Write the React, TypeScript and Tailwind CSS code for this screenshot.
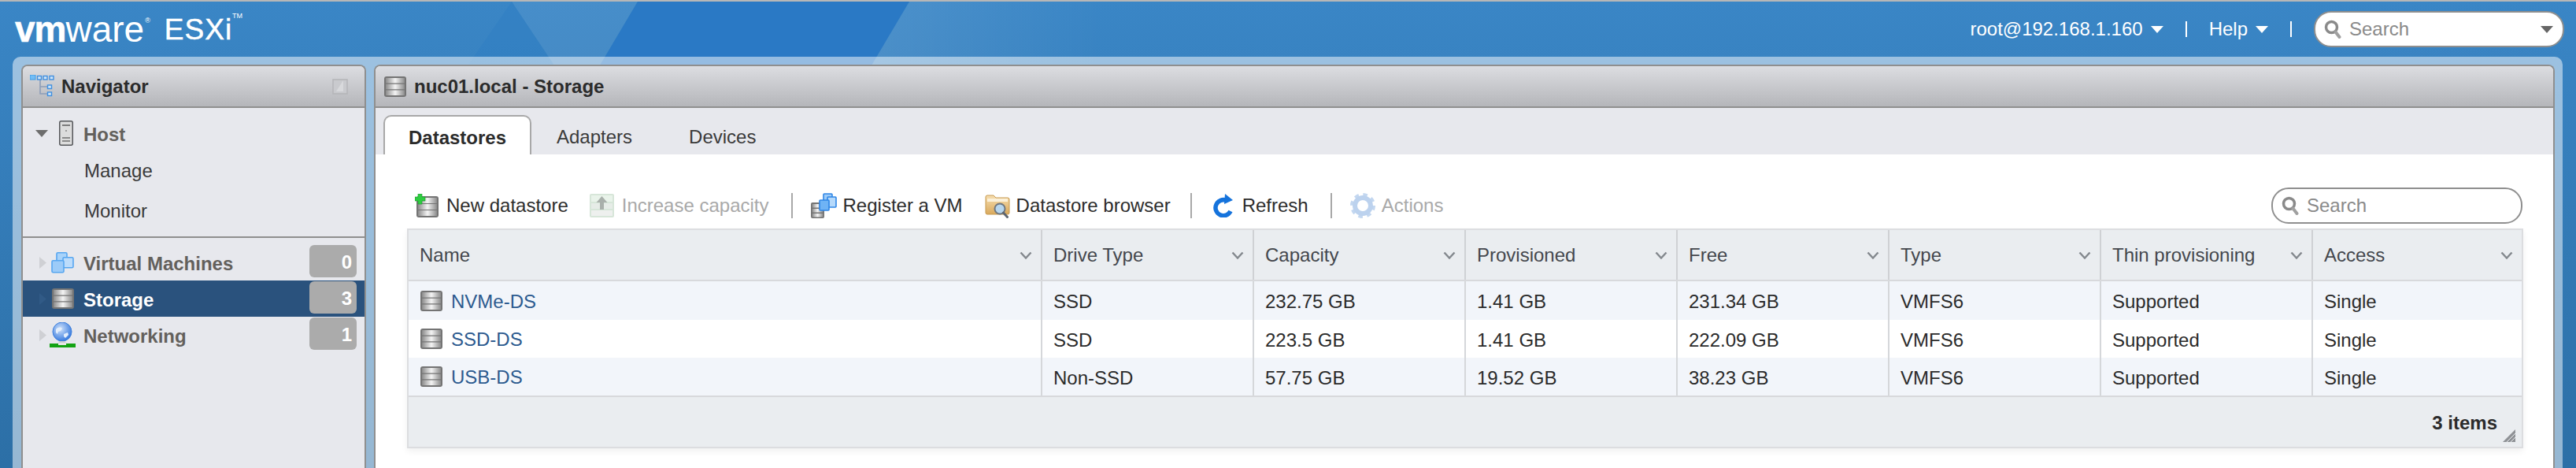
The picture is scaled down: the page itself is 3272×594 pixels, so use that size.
import React from "react";

function Defs() {
  return (
    <svg className="absolute w-0 h-0" aria-hidden="true">
      <defs>
        <linearGradient id="band" x1="0" y1="0" x2="1" y2="0">
          <stop offset="0" stopColor="#8c8c8c" />
          <stop offset="0.5" stopColor="#f4f4f4" />
          <stop offset="1" stopColor="#8c8c8c" />
        </linearGradient>
        <linearGradient id="wedge" x1="0" y1="0" x2="1" y2="0">
          <stop offset="0" stopColor="#ffffff" stopOpacity="0.1" />
          <stop offset="1" stopColor="#ffffff" stopOpacity="0" />
        </linearGradient>
        <radialGradient id="globe" cx="0.4" cy="0.35" r="0.7">
          <stop offset="0" stopColor="#cfe2fb" />
          <stop offset="1" stopColor="#2f74dc" />
        </radialGradient>
        <linearGradient id="folder" x1="0" y1="0" x2="0" y2="1">
          <stop offset="0" stopColor="#f6deb0" />
          <stop offset="1" stopColor="#d9a95c" />
        </linearGradient>
      </defs>
    </svg>
  );
}

function Disk({ className }: { className?: string }) {
  return (
    <svg viewBox="0 0 28 26" className={className}>
      <rect x="0" y="0" width="28" height="26" rx="3" fill="#747474" />
      <rect x="2" y="2" width="24" height="6.5" fill="url(#band)" />
      <rect x="2" y="9.75" width="24" height="6.5" fill="url(#band)" />
      <rect x="2" y="17.5" width="24" height="6.5" fill="url(#band)" />
    </svg>
  );
}

function TreeIcon() {
  return (
    <svg viewBox="0 0 32 30" className="w-[32px] h-[30px] shrink-0">
      <path d="M13 6V24H23M13 15H23" fill="none" stroke="#8c9db8" strokeWidth="1.6" />
      <rect x="0" y="0" width="7" height="6" fill="#73bdf5" stroke="#3f9be6" strokeWidth="1" />
      <rect x="9.5" y="1.5" width="5" height="4.5" fill="#cfe5f8" stroke="#3f8fe0" strokeWidth="1.4" />
      <rect x="17" y="1.5" width="5" height="4.5" fill="#cfe5f8" stroke="#3f8fe0" strokeWidth="1.4" />
      <rect x="25" y="1.5" width="5" height="4.5" fill="#cfe5f8" stroke="#3f8fe0" strokeWidth="1.4" />
      <rect x="22.5" y="13" width="5" height="4.5" fill="#cfe5f8" stroke="#3f8fe0" strokeWidth="1.4" />
      <rect x="22.5" y="22" width="5" height="4.5" fill="#cfe5f8" stroke="#3f8fe0" strokeWidth="1.4" />
    </svg>
  );
}

function HostIcon() {
  return (
    <svg viewBox="0 0 18 32" className="w-[18px] h-[32px] shrink-0">
      <rect x="0.75" y="0.75" width="16.5" height="30.5" rx="2" fill="#dcdcdc" stroke="#55575a" strokeWidth="1.5" />
      <rect x="4" y="5" width="10" height="2" fill="#7c7c7c" />
      <rect x="8" y="12" width="2" height="2" fill="#9a9a9a" />
      <rect x="4" y="21" width="10" height="2" fill="#8a8a8a" />
      <rect x="4" y="25" width="10" height="2" fill="#8a8a8a" />
    </svg>
  );
}

function VmIcon({ className }: { className?: string }) {
  return (
    <svg viewBox="0 0 29 27" className={className}>
      <rect x="7" y="0.8" width="13" height="13" rx="1.5" fill="#a8d3fa" stroke="#56a6f0" strokeWidth="1.6" />
      <rect x="15" y="6.8" width="13" height="13" rx="1.5" fill="#bcdcfb" stroke="#56a6f0" strokeWidth="1.6" />
      <rect x="1" y="10.8" width="15" height="15" rx="1.5" fill="#9ccbf8" stroke="#56a6f0" strokeWidth="1.6" />
    </svg>
  );
}

function GlobeIcon() {
  return (
    <svg viewBox="0 0 33 32" className="w-[33px] h-[32px] shrink-0">
      <circle cx="16" cy="12" r="12" fill="url(#globe)" stroke="#3d7fdc" strokeWidth="1" />
      <path d="M8 9c3-3 6-3 8-1l-2 3-3 1-1 3-2-2zM18 15l5-2 1 3-4 4-2-2z" fill="#e3eefc" />
      <path d="M13 24h6l3 3H10z" fill="#c9ccd2" />
      <rect x="0" y="27" width="33" height="5" fill="#13a313" />
      <rect x="11" y="26" width="10" height="3" fill="#e6e6e6" />
    </svg>
  );
}

function NewDsIcon() {
  return (
    <svg viewBox="0 0 30 30" className="w-[30px] h-[30px] shrink-0">
      <g transform="translate(2 3)">
        <rect x="0" y="0" width="28" height="27" rx="3" fill="#747474" />
        <rect x="2" y="2" width="24" height="7" fill="url(#band)" />
        <rect x="2" y="10" width="24" height="7" fill="url(#band)" />
        <rect x="2" y="18" width="24" height="7" fill="url(#band)" />
      </g>
      <path d="M4 0h5v4h4v5H9v4H4V9H0V4h4z" fill="#2ecc40" stroke="#1d9a2c" strokeWidth="0.6" />
    </svg>
  );
}

function IncreaseIcon() {
  return (
    <svg viewBox="0 0 31 30" className="w-[31px] h-[30px] shrink-0">
      <rect x="0" y="0" width="31" height="30" rx="2" fill="#d7e6d9" />
      <rect x="2" y="2" width="27" height="8" fill="#e9f3ea" />
      <rect x="2" y="12" width="27" height="7" fill="#e6ece7" />
      <rect x="2" y="21" width="27" height="7" fill="#eef0ee" />
      <path d="M15.5 3l7 8h-4.5v9h-5v-9H8.500z" fill="#a9b0ab" />
    </svg>
  );
}

function RegisterIcon() {
  return (
    <svg viewBox="0 0 33 32" className="w-[33px] h-[32px] shrink-0">
      <rect x="0" y="12" width="17" height="20" rx="2" fill="#747474" />
      <rect x="1.500" y="14" width="14" height="4.500" fill="url(#band)" />
      <rect x="1.500" y="20" width="14" height="4.500" fill="url(#band)" />
      <rect x="1.500" y="26" width="14" height="4.500" fill="url(#band)" />
      <rect x="16" y="1" width="11" height="13" rx="1" fill="#9ccbf8" stroke="#2f86e6" strokeWidth="1.600" />
      <rect x="21" y="5" width="11" height="13" rx="1" fill="#b5d9fb" stroke="#2f86e6" strokeWidth="1.600" />
      <rect x="11" y="9" width="12" height="13" rx="1" fill="#6fb3f5" stroke="#2f86e6" strokeWidth="1.600" />
    </svg>
  );
}

function FolderIcon() {
  return (
    <svg viewBox="0 0 32 32" className="w-[32px] h-[32px] shrink-0">
      <path d="M1 5a2 2 0 0 1 2-2h8l3 3h15a2 2 0 0 1 2 2v17a2 2 0 0 1-2 2H3a2 2 0 0 1-2-2z" fill="url(#folder)" stroke="#c79a50" strokeWidth="1" />
      <rect x="3" y="7" width="26" height="4" fill="#fbf0d8" />
      <circle cx="19" cy="20" r="6.500" fill="#b7d6ee" stroke="#6f7780" strokeWidth="2" />
      <path d="M23.500 25l5 5.500" stroke="#5e6670" strokeWidth="3" strokeLinecap="round" />
    </svg>
  );
}

function RefreshIcon() {
  return (
    <svg viewBox="0 0 28 30" className="w-[28px] h-[30px] shrink-0">
      <path d="M19 8.500A10 10 0 1 0 24 22" fill="none" stroke="#1573dc" strokeWidth="5.500" />
      <path d="M17 0l10 8-11 5z" fill="#1573dc" />
    </svg>
  );
}

function GearIcon() {
  return (
    <svg viewBox="0 0 32 32" className="w-[32px] h-[32px] shrink-0">
      <circle cx="16" cy="16" r="13" fill="none" stroke="#c3d7f0" strokeWidth="6" strokeDasharray="5.100 5.100" />
      <circle cx="16" cy="16" r="10" fill="none" stroke="#bcd2ee" strokeWidth="6" />
    </svg>
  );
}

function Glass() {
  return (
    <svg viewBox="0 0 22 24" className="w-[22px] h-[24px] shrink-0">
      <circle cx="9.500" cy="9.500" r="7" fill="none" stroke="#8a8a8a" strokeWidth="3.500" />
      <path d="M14.500 15.500l5 6.500" stroke="#a0a0a0" strokeWidth="4" strokeLinecap="round" />
    </svg>
  );
}

function Caret({ color }: { color: string }) {
  return (
    <svg viewBox="0 0 16 9" className="w-[16px] h-[9px] shrink-0">
      <path d="M0 0h16L8 9z" fill={color} />
    </svg>
  );
}

function Chevron() {
  return (
    <svg viewBox="0 0 16 10" className="w-[16px] h-[10px] shrink-0">
      <path d="M1.500 1.500L8 8.500L14.500 1.500" fill="none" stroke="#83888d" strokeWidth="2.400" />
    </svg>
  );
}

function SideArrow({ dark }: { dark?: boolean }) {
  return (
    <svg viewBox="0 0 9 15" className="w-[9px] h-[15px] shrink-0">
      <path d="M0 0l9 7.500L0 15z" fill={dark ? "#315a86" : "#cfd0d4"} />
    </svg>
  );
}

function SideRow({ icon, label, count, active }: { icon: React.ReactNode; label: string; count: number; active?: boolean }) {
  return (
    <div className={`h-[46px] flex items-center relative pl-[21px] ${active ? "bg-[#2a527d] text-white" : "text-[#63605c]"}`}>
      <SideArrow dark={active} />
      <div className="w-[47px] flex justify-center -translate-x-[3px]">{icon}</div>
      <span className="text-[24px] font-bold translate-y-[2px]">{label}</span>
      <span className="absolute right-[10px] top-[1px] w-[60px] h-[41px] rounded-[6px] bg-[#ababab] text-white font-bold text-[24px] flex items-center justify-end pr-[6px] pt-[2px]">{count}</span>
    </div>
  );
}

const columns = ["Name", "Drive Type", "Capacity", "Provisioned", "Free", "Type", "Thin provisioning", "Access"];
const rows = [
  ["NVMe-DS", "SSD", "232.75 GB", "1.41 GB", "231.34 GB", "VMFS6", "Supported", "Single"],
  ["SSD-DS", "SSD", "223.5 GB", "1.41 GB", "222.09 GB", "VMFS6", "Supported", "Single"],
  ["USB-DS", "Non-SSD", "57.75 GB", "19.52 GB", "38.23 GB", "VMFS6", "Supported", "Single"],
];
const rowHeights = ["h-[49px]", "h-[48px]", "h-[48px]"];

function Tool({ icon, label, disabled, gap }: { icon: React.ReactNode; label: string; disabled?: boolean; gap: string }) {
  return (
    <div className={`flex items-center ${gap}`}>
      {icon}
      <span className={disabled ? "text-[#a9a9a9]" : "text-[#2d2d2d]"}>{label}</span>
    </div>
  );
}

function Sep() {
  return <div className="w-[2px] h-[32px] bg-[#a8a8a8]" />;
}

export default function App() {
  return (
    <div className="relative w-[3272px] h-[594px] overflow-hidden flex flex-col bg-gradient-to-b from-[#3a86c6] to-[#2c6fa6] font-['Liberation_Sans',sans-serif] text-[24px] leading-none">
      <Defs />
      <svg className="absolute left-0 top-0 w-[1400px] h-[110px]" viewBox="0 0 1400 110" aria-hidden="true">
        <polygon points="650,2 595,82 595,110 722,110" fill="#2b7ac3" fillOpacity="0.35" />
        <polygon points="650,2 810,2 746,110 722,110" fill="#ffffff" fillOpacity="0.07" />
        <polygon points="810,2 1155,2 1091,110 746,110" fill="#2a79c5" />
        <polygon points="1155,2 1400,2 1400,110 1091,110" fill="url(#wedge)" />
      </svg>

      <div className="relative h-[2px] bg-[#b7b7b7] shrink-0" />

      <header className="relative h-[70px] shrink-0 flex items-center justify-between pl-[19px] pr-[15px] text-white">
        <div className="flex items-center">
          <div className="flex items-start">
            <span className="text-[46px] font-bold tracking-[-1px] [-webkit-text-stroke:0.6px_white]">vm</span>
            <span className="text-[46px]">ware</span>
            <span className="text-[9px] ml-[1px] mt-[8px]">®</span>
          </div>
          <span className="ml-[18px] text-[37px] tracking-[1px] [-webkit-text-stroke:0.5px_white]">ESXi</span>
          <span className="text-[9px] self-start mt-[2px]">TM</span>
        </div>
        <div className="flex items-center">
          <span>root@192.168.1.160</span>
          <span className="ml-[10px]"><Caret color="#ffffff" /></span>
          <div className="ml-[28px] w-[2px] h-[20px] bg-white" />
          <span className="ml-[28px]">Help</span>
          <span className="ml-[10px]"><Caret color="#ffffff" /></span>
          <div className="ml-[28px] w-[2px] h-[20px] bg-white" />
          <div className="ml-[28px] w-[318px] h-[46px] bg-white rounded-[22px] border-2 border-[#8f8f8f] flex items-center pl-[11px] pr-[12px] text-[#8a8a8a]">
            <Glass />
            <span className="ml-[10px] flex-1">Search</span>
            <Caret color="#666666" />
          </div>
        </div>
      </header>

      <div className="relative flex-1 ml-[16px] mr-[17px] bg-white/50 rounded-t-[10px] pt-[10px] pl-[11px] pr-[10px] flex gap-[10px] min-h-0">
        <aside className="w-[438px] shrink-0 border-x-2 border-t-2 border-[#8f8f8f] rounded-t-[8px] bg-[#e7e8ed] overflow-hidden flex flex-col">
          <div className="h-[53px] shrink-0 border-b-2 border-[#8f8f8f] bg-gradient-to-b from-[#dcdde1] to-[#b5b6ba] flex items-center pl-[9px] pr-[21px]">
            <TreeIcon />
            <span className="ml-[8px] font-bold text-[#2b2b2b] flex-1">Navigator</span>
            <svg viewBox="0 0 20 20" className="w-[20px] h-[20px]">
              <path d="M1 1h18v18H1z" fill="#c9cace" stroke="#b4b5b8" strokeWidth="1.500" />
              <path d="M14 2v14H5" fill="#d8d9dc" />
            </svg>
          </div>
          <div className="h-[165px] shrink-0 border-b-2 border-[#8f8f8f] pt-[9px] relative">
            <div className="h-[46px] flex items-center pl-[16px]">
              <Caret color="#6d6d6d" />
              <span className="ml-[14px]"><HostIcon /></span>
              <span className="ml-[13px] font-bold text-[#63605c] translate-y-[2px]">Host</span>
            </div>
            <div className="h-[49px] flex items-center pl-[78px] text-[#3a3a3a]">Manage</div>
            <div className="h-[50px] flex items-center pl-[78px] pt-[3px] text-[#3a3a3a]">Monitor</div>
          </div>
          <div className="pt-[8px] flex flex-col">
            <SideRow icon={<VmIcon className="w-[29px] h-[27px]" />} label="Virtual Machines" count={0} />
            <SideRow icon={<Disk className="w-[28px] h-[26px]" />} label="Storage" count={3} active />
            <SideRow icon={<GlobeIcon />} label="Networking" count={1} />
          </div>
        </aside>

        <main className="flex-1 min-w-0 border-x-2 border-t-2 border-[#8f8f8f] rounded-t-[8px] bg-white overflow-hidden flex flex-col">
          <div className="h-[53px] shrink-0 border-b-2 border-[#8f8f8f] bg-gradient-to-b from-[#dcdde1] to-[#b5b6ba] flex items-center pl-[11px]">
            <Disk className="w-[28px] h-[26px] shrink-0" />
            <span className="ml-[10px] font-bold text-[#2b2b2b]">nuc01.local - Storage</span>
          </div>
          <div className="h-[59px] shrink-0 bg-[#e7e8ed] flex items-end pl-[10px]">
            <div className="h-[50px] w-[188px] border-x-2 border-t-2 border-[#a8a8a8] rounded-t-[10px] bg-white flex items-center justify-center pt-[6px] font-bold text-[#2b2b2b]">Datastores</div>
            <div className="h-[50px] flex items-center pt-[6px] ml-[32px] text-[#3a3a3a]">Adapters</div>
            <div className="h-[50px] flex items-center pt-[6px] ml-[72px] text-[#3a3a3a]">Devices</div>
          </div>
          <div className="flex-1 min-h-0 pt-[42px] pl-[40px] pr-[38px]">
            <div className="h-[46px] mb-[6px] flex items-center justify-between">
              <div className="flex items-center pl-[10px]">
                <Tool gap="gap-[10px]" icon={<NewDsIcon />} label="New datastore" />
                <div className="ml-[27px]"><Tool gap="gap-[10px]" icon={<IncreaseIcon />} label="Increase capacity" disabled /></div>
                <div className="ml-[28px]"><Sep /></div>
                <div className="ml-[23px]"><Tool gap="gap-[8px]" icon={<RegisterIcon />} label="Register a VM" /></div>
                <div className="ml-[28px]"><Tool gap="gap-[8px]" icon={<FolderIcon />} label="Datastore browser" /></div>
                <div className="ml-[25px]"><Sep /></div>
                <div className="ml-[25px]"><Tool gap="gap-[11px]" icon={<RefreshIcon />} label="Refresh" /></div>
                <div className="ml-[28px]"><Sep /></div>
                <div className="ml-[23px]"><Tool gap="gap-[8px]" icon={<GearIcon />} label="Actions" disabled /></div>
              </div>
              <div className="w-[319px] h-[46px] rounded-[22px] border-2 border-[#8f8f8f] bg-white flex items-center pl-[11px] text-[#8a8a8a] -translate-x-[1px]">
                <Glass />
                <span className="ml-[10px]">Search</span>
              </div>
            </div>

            <div className="w-[2688px] border-2 border-[#dcdde0] shadow-[0_4px_8px_rgba(0,0,0,0.06)]">
              <div className="grid grid-cols-[803px_repeat(6,269px)_267px] h-[65px] bg-[#eaedf0] border-b-2 border-[#d8d9dc]">
                {columns.map((c, i) => (
                  <div key={c} className={`flex items-center justify-between ${i === 0 ? "pl-[14px]" : "pl-[14px] border-l-2 border-[#cfd1d4]"} pr-[11px] text-[#44474d]`}>
                    <span>{c}</span>
                    <Chevron />
                  </div>
                ))}
              </div>
              {rows.map((r, ri) => (
                <div key={r[0]} className={`grid grid-cols-[803px_repeat(6,269px)_267px] ${rowHeights[ri]} ${ri === 1 ? "bg-white" : "bg-[#f2f5fa]"}`}>
                  {r.map((v, i) =>
                    i === 0 ? (
                      <div key={i} className="flex items-center pl-[15px] gap-[11px] text-[#2c5a8f]">
                        <Disk className="w-[28px] h-[26px] shrink-0" />
                        <span className="translate-y-[1px]">{v}</span>
                      </div>
                    ) : (
                      <div key={i} className="flex items-center pl-[14px] pt-[3px] border-l-2 border-[#d5d7da] text-[#2b2b2b]">{v}</div>
                    )
                  )}
                </div>
              ))}
              <div className="relative h-[65px] bg-[#eaedf0] border-t-2 border-[#d8d9dc] flex items-center justify-end pr-[31px] pt-[3px]">
                <span className="font-bold text-[#2b2b2b]">3 items</span>
                <svg viewBox="0 0 16 16" className="absolute right-[8px] bottom-[6px] w-[16px] h-[16px]">
                  <path d="M16 0V16H0z" fill="#8f9296" />
                  <path d="M5 16L16 5M10 16l6-6" stroke="#eaedf0" strokeWidth="1" />
                </svg>
              </div>
            </div>
          </div>
        </main>
      </div>
    </div>
  );
}
